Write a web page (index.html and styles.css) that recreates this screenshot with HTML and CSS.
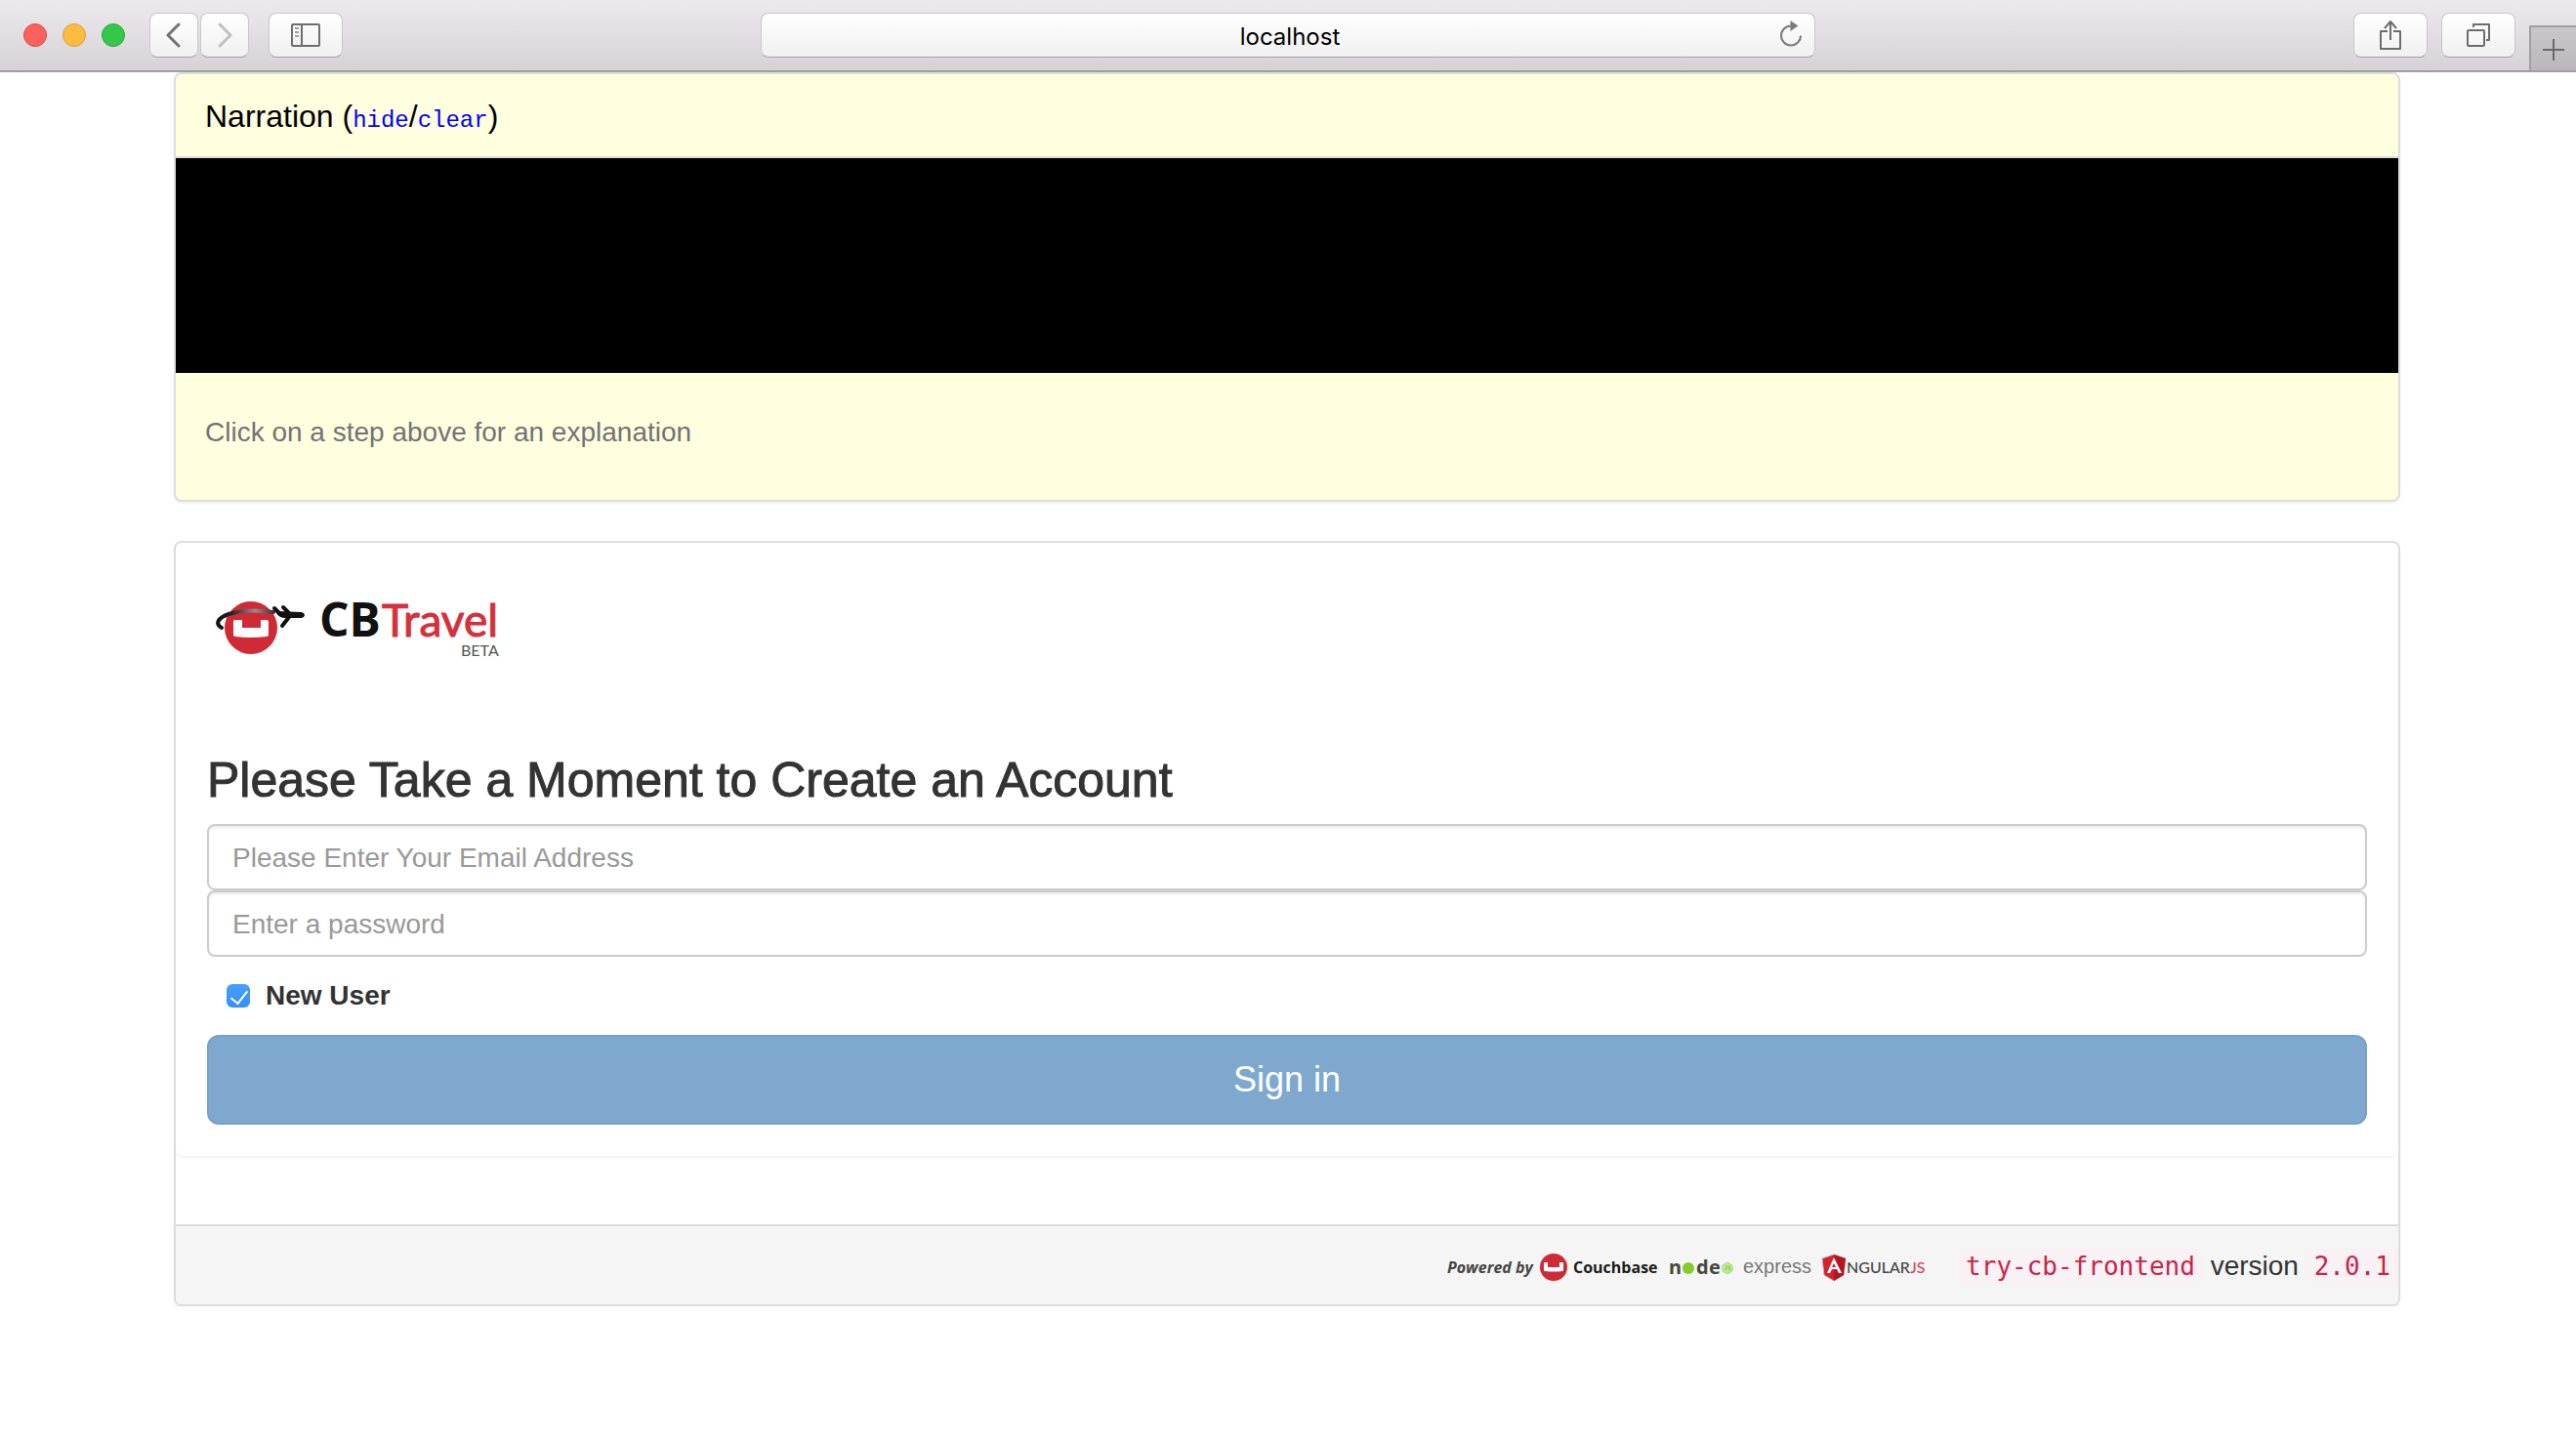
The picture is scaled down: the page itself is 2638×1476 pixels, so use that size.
FILE: index.html
```html
<!DOCTYPE html>
<html lang="en">
<head>
<meta charset="utf-8">
<title>CBTravel</title>
<link rel="stylesheet" href="styles.css">
</head>
<body>
<header class="toolbar">
  <div class="toolbar-left">
    <div class="lights">
      <span class="light light-close"></span>
      <span class="light light-min"></span>
      <span class="light light-max"></span>
    </div>
    <div class="nav-buttons">
      <button class="tool tool-nav" type="button" aria-label="Back">
        <svg width="16" height="26" viewBox="0 0 16 26" fill="none" stroke="#737373" stroke-width="3" stroke-linecap="round" stroke-linejoin="round"><path d="M13 2 2 13l11 11"/></svg>
      </button>
      <button class="tool tool-nav" type="button" aria-label="Forward">
        <svg width="16" height="26" viewBox="0 0 16 26" fill="none" stroke="#c0c0c0" stroke-width="3" stroke-linecap="round" stroke-linejoin="round"><path d="M3 2l11 11L3 24"/></svg>
      </button>
    </div>
    <button class="tool" type="button" aria-label="Sidebar">
      <svg width="30" height="24" viewBox="0 0 30 24" fill="none" stroke="#6e6e6e" stroke-width="2"><rect x="1" y="1" width="28" height="22" rx="1"/><path d="M11 1v22"/><path stroke="#a0a0a0" d="M4 5h4M4 9h4M4 13h4"/></svg>
    </button>
  </div>
  <div class="address">
    <input class="address-input" type="text" value="localhost" aria-label="Address">
    <button class="reload" type="button" aria-label="Reload">
      <svg width="24" height="28" viewBox="0 0 24 28" fill="none" stroke="#7c7c7c" stroke-width="2"><path d="M12 5.500A10 10 0 1 0 22 15.500"/><path d="M11.500 0v11l8-5.500z" fill="#7c7c7c" stroke="none"/></svg>
    </button>
  </div>
  <div class="toolbar-right">
    <button class="tool" type="button" aria-label="Share">
      <svg width="24" height="32" viewBox="0 0 24 32" fill="none" stroke="#6e6e6e" stroke-width="2" stroke-linejoin="round"><path d="M9 12H2v18h20V12h-7"/><path d="M12 21V3M6 9l6-7 6 7"/></svg>
    </button>
    <button class="tool" type="button" aria-label="Show tabs">
      <svg width="26" height="26" viewBox="0 0 26 26" fill="none" stroke="#6e6e6e" stroke-width="2" stroke-linejoin="round"><rect x="2" y="8" width="17" height="16" rx="1"/><path d="M8 5V2h16v16h-3"/></svg>
    </button>
    <button class="new-tab" type="button" aria-label="New tab">
      <svg width="22" height="22" viewBox="0 0 22 22" stroke="#6a686b" stroke-width="2"><path d="M11 0v22M0 11h22"/></svg>
    </button>
  </div>
</header>
<main class="page">
  <section class="panel narration">
    <h4 class="narration-title">Narration (<a class="narration-link" href="#hide">hide</a>/<a class="narration-link" href="#clear">clear</a>)</h4>
    <div class="narration-log"></div>
    <p class="narration-help">Click on a step above for an explanation</p>
  </section>
  <section class="panel">
    <form class="signup">
      <svg class="logo" width="320" height="100" viewBox="0 0 320 100" role="img" aria-label="CBTravel beta">
        <defs>
          <linearGradient id="trail" gradientUnits="userSpaceOnUse" x1="10" y1="0" x2="70" y2="0">
            <stop offset="0" stop-color="#111"/>
            <stop offset=".25" stop-color="#222"/>
            <stop offset=".65" stop-color="#a08a8c"/>
            <stop offset="1" stop-color="#3a2a2c"/>
          </linearGradient>
        </defs>
        <circle cx="45" cy="55" r="27" fill="#cf2a35"/>
        <path d="M28 47h8v8h19v-8h6q2 0 2 2v13q0 2-2 2-16 2-32 0-2 0-2-2V49q0-2 1-2z" fill="#fff"/>
        <path d="M15 55C8 51 11 45 22 41Q42 35 68 39" fill="none" stroke="url(#trail)" stroke-width="4" stroke-linecap="round"/>
        <path d="M69 35l6 6M78 34l6 6M84 44l-7 9" fill="none" stroke="#111" stroke-width="4" stroke-linecap="round" stroke-linejoin="round"/>
        <path d="M71 38l26 1q3 1 3 3t-3 3H80q-6 0-9-5z" fill="#111"/>
        <text class="logo-cb" x="115" y="64">CB</text>
        <text class="logo-travel" x="179" y="64">Travel</text>
        <text class="logo-beta" x="260" y="84">BETA</text>
      </svg>
      <h3 class="signup-title">Please Take a Moment to Create an Account</h3>
      <input class="field" type="email" placeholder="Please Enter Your Email Address" aria-label="Email address">
      <input class="field" type="password" placeholder="Enter a password" aria-label="Password">
      <label class="new-user" for="new-user"><input class="tick" id="new-user" type="checkbox" checked>New User</label>
      <button class="sign-in" type="submit" disabled>Sign in</button>
    </form>
    <footer class="footer">
      <svg class="powered" width="500" height="40" viewBox="0 0 500 40" role="img" aria-label="Powered by Couchbase, node, express, AngularJS">
        <text class="by" x="6" y="28">Powered by</text>
        <circle cx="115" cy="22" r="14" fill="#cf2a35"/>
        <path d="M106 17h3v5h12v-5h3q1 0 1 1v7q0 1-1 1-9 1-18 0-1 0-1-1v-7q0-1 1-1z" fill="#fff"/>
        <text class="couch" x="135" y="28">Couchbase</text>
        <text class="node" x="233" y="29">n</text>
        <circle cx="253" cy="23" r="6" fill="#83cd29"/>
        <text class="node" x="261" y="29">d</text>
        <text class="node" x="274" y="29">e</text>
        <path d="M293 17l5 3v6l-5 3-5-3v-6z" fill="#c4e8a0" stroke="#a5dc72" stroke-width="1"/>
        <path d="M292 20v5l-2-1M296 21h-2v2h2v2h-2" fill="none" stroke="#83cd29" stroke-width="1"/>
        <text class="express" x="309" y="28">express</text>
        <path d="M402 9l12 4-2 17-10 6-10-6-2-17z" fill="#d6222b" stroke="#c4b8b8" stroke-width="1"/>
        <path d="M402 9l12 4-2 17-10 6z" fill="#b3161f"/>
        <path d="M402 12l-7 16h3l2-4h5l2 4h3zm0 6l2 4h-4z" fill="#fff"/>
        <text class="angular" x="415" y="28">NGULAR<tspan class="angular-js">JS</tspan></text>
      </svg>
      <p class="version"><code class="code">try-cb-frontend</code> version <code class="code">2.0.1</code></p>
    </footer>
  </section>
</main>
</body>
</html>
```
FILE: styles.css
```css
* { box-sizing: border-box; }

body {
  margin: 0;
  background: #fff;
  color: #333;
  font-family: "Liberation Sans", Arial, sans-serif;
  font-size: 28px;
  line-height: 40px;
}

button, input { margin: 0; font: inherit; }

/* Browser toolbar */
.toolbar {
  display: grid;
  grid-template-columns: 1fr minmax(0, 1080px) 1fr;
  align-items: center;
  height: 74px;
  border-bottom: 2px solid #a09ea1;
  background: linear-gradient(#eceaed, #d5d3d6);
}
.toolbar-left { display: flex; align-items: center; padding-left: 24px; }
.lights { display: flex; gap: 16px; margin-right: 25px; }
.light { width: 24px; height: 24px; border: 1px solid #e0443e; border-radius: 50%; background: #fc615d; }
.light-min { border-color: #de9f34; background: #fdbc40; }
.light-max { border-color: #27a635; background: #34c84a; }
.nav-buttons { display: flex; gap: 2px; margin-right: 20px; }
.tool {
  display: flex;
  align-items: center;
  justify-content: center;
  width: 76px;
  height: 46px;
  padding: 0;
  border: 1px solid #c9c7ca;
  border-bottom-color: #a5a3a6;
  border-radius: 8px;
  background: linear-gradient(#fff, #f0f0f0);
}
.tool-nav { width: 50px; }
.address {
  display: flex;
  align-items: center;
  height: 46px;
  padding: 0 8px 0 40px;
  border: 1px solid #c9c7ca;
  border-bottom-color: #a5a3a6;
  border-radius: 8px;
  background: linear-gradient(#fff, #f0f0f0);
}
.address-input {
  flex: 1;
  min-width: 0;
  padding: 3px 0 0;
  border: 0;
  background: none;
  color: #000;
  font-family: Inter, sans-serif;
  font-size: 24px;
  line-height: 32px;
  text-align: center;
}
.reload { display: flex; padding: 0 4px 2px 0; border: 0; background: none; }
.toolbar-right { display: flex; align-items: center; justify-content: flex-end; gap: 14px; }
.new-tab {
  display: flex;
  align-items: center;
  justify-content: center;
  align-self: flex-end;
  width: 48px;
  height: 46px;
  margin-top: 26px;
  padding: 2px 0 0;
  border: solid #a09ea1;
  border-width: 2px 0 0 2px;
  background: linear-gradient(#c9c7ca, #b9b7ba);
}

/* Page */
.page { display: flex; flex-direction: column; gap: 40px; padding: 0 180px 0 178px; }
.panel {
  border: 2px solid #ddd;
  border-radius: 8px;
  background: #fff;
  box-shadow: 0 2px 2px rgba(0, 0, 0, .05);
  overflow: hidden;
}
.narration { background: #ffffe0; }
.narration-title {
  margin: 0;
  padding: 21px 30px 19px;
  border-bottom: 2px solid #ddd;
  color: #000;
  font-size: 32px;
  font-weight: 400;
  line-height: 44px;
}
.narration-link {
  color: #00f;
  font-family: "Liberation Mono", "Courier New", monospace;
  font-size: 24px;
  line-height: 24px;
  text-decoration: none;
}
.narration-log { height: 220px; background: #000; }
.narration-help { margin: 0; padding: 41px 30px 49px; color: #737373; }

.signup {
  display: flex;
  flex-direction: column;
  margin-bottom: 70px;
  padding: 32px;
  border-radius: 8px;
  box-shadow: 0 2px 2px rgba(0, 0, 0, .05);
}
.logo { margin-bottom: 84px; font-family: Lato, sans-serif; }
.logo-cb { font-family: "Open Sans", sans-serif; font-size: 48px; font-weight: 700; fill: #111; }
.logo-travel { font-size: 46px; fill: #d5303b; stroke: #d5303b; stroke-width: 1px; }
.logo-beta { font-size: 16px; fill: #555; }
.signup-title {
  margin: 0 0 18px;
  font-size: 50px;
  font-weight: 400;
  line-height: 54px;
  -webkit-text-stroke: 1px #333;
}
.field {
  width: 100%;
  height: 68px;
  padding: 13px 24px 11px;
  border: 2px solid #ccc;
  border-radius: 8px;
  background: #fff;
  box-shadow: inset 0 2px 2px rgba(0, 0, 0, .075);
}
.field::placeholder { color: #999; opacity: 1; }
.new-user {
  display: flex;
  align-items: center;
  align-self: flex-start;
  gap: 16px;
  height: 80px;
  padding-left: 20px;
  font-weight: 700;
}
.tick {
  appearance: none;
  width: 24px;
  height: 24px;
  border-radius: 6px;
  background: linear-gradient(#4a9ff8, #3290fb);
}
.tick:checked::before {
  content: "";
  display: block;
  width: 8px;
  height: 15px;
  margin: 3px 8px;
  border: solid #fff;
  border-width: 0 2px 2px 0;
  transform: rotate(38deg);
}
.sign-in {
  height: 92px;
  border: 2px solid #77a1c6;
  border-radius: 12px;
  background: #7ea8ce;
  color: #fff;
  font-size: 36px;
  line-height: 48px;
}

.footer {
  display: flex;
  align-items: center;
  justify-content: flex-end;
  gap: 29px;
  min-height: 82px;
  border-top: 2px solid #ddd;
  background: #f5f5f5;
}
.version { margin: 0; padding-top: 2px; white-space: nowrap; }
.code {
  padding: 4px 8px;
  border-radius: 8px;
  background: #f9f2f4;
  color: #c7254e;
  font-family: "DejaVu Sans Mono", Menlo, monospace;
  font-size: 26px;
}
.powered { font-family: "Open Sans", sans-serif; }
.by { font-size: 16px; font-style: italic; font-weight: 700; fill: #444; }
.couch { font-size: 16px; font-weight: 700; fill: #1b1b1b; }
.node { font-family: "Noto Sans", sans-serif; font-size: 20px; font-weight: 700; fill: #46483e; }
.express { font-family: "Liberation Sans", sans-serif; font-size: 20px; fill: #777; }
.angular { font-family: Lato, sans-serif; font-size: 16px; font-weight: 500; fill: #444; }
.angular-js { fill: #c94b50; }
```
